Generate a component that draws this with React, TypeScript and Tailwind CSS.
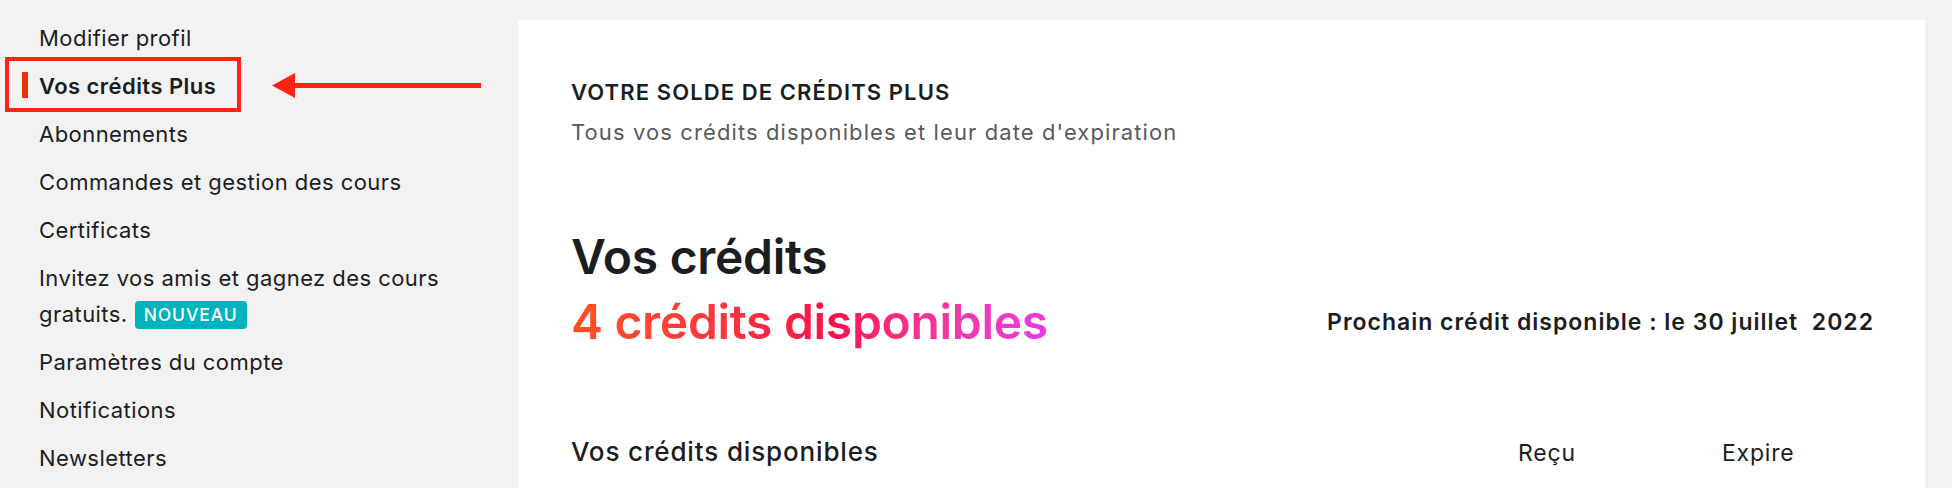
import React from 'react';

const menuItems = [
  { label: 'Modifier profil' },
  { label: 'Vos crédits Plus', active: true },
  { label: 'Abonnements' },
  { label: 'Commandes et gestion des cours' },
  { label: 'Certificats' },
  { label: 'Invitez vos amis et gagnez des cours gratuits.', badge: 'NOUVEAU' },
  { label: 'Paramètres du compte' },
  { label: 'Notifications' },
  { label: 'Newsletters' },
];

function Sidebar() {
  return (
    <nav className="relative w-[518px] shrink-0 pt-[14px]">
      <ul>
        {menuItems.map((item) => (
          <li
            key={item.label}
            className={`relative py-[6px] pl-[39px] pr-[38px] text-[22px] leading-[36px] tracking-[0.45px] text-[#1c1d1f] ${
              item.active ? 'font-semibold' : 'font-normal'
            }`}
          >
            {item.active && (
              <span className="absolute left-[22px] top-[10px] h-[26px] w-[6px] bg-[#ea2e0e]" />
            )}
            <span className="block w-[441px]">
              {item.label}
              {item.badge && (
                <span className="ml-[7px] inline-block rounded-[4px] bg-[#00b3bd] px-[9px] align-[1px] text-[17.5px] font-medium leading-[28px] tracking-[0.9px] text-white">
                  {item.badge}
                </span>
              )}
            </span>
          </li>
        ))}
      </ul>

      {/* annotation: red box + arrow */}
      <div className="pointer-events-none absolute left-[5px] top-[57px] h-[55px] w-[236px] border-[4px] border-[#ff2312]" />
      <svg
        className="pointer-events-none absolute left-[272px] top-[73px]"
        width="210"
        height="25"
        viewBox="0 0 210 25"
      >
        <line x1="22" y1="12.5" x2="209" y2="12.5" stroke="#ff2312" strokeWidth="5" />
        <polygon points="0,12.5 23,0 23,25" fill="#ff2312" />
      </svg>
    </nav>
  );
}

function CreditsPanel() {
  return (
    <main className="mt-[20px] mr-[27px] flex-1 bg-white pt-[57px] pl-[53px] pr-[51px]">
      <h3 className="text-[22px] font-semibold leading-[30px] tracking-[1.1px] text-[#1c1d1f]">
        VOTRE SOLDE DE CRÉDITS PLUS
      </h3>
      <p className="mt-[10px] text-[22px] leading-[30px] tracking-[1.1px] text-[#5a5a5a]">
        Tous vos crédits disponibles et leur date d'expiration
      </p>

      <h2 className="mt-[81px] text-[48px] font-semibold leading-[58px] tracking-[-0.3px] text-[#1c1d1f]">
        Vos crédits
      </h2>
      <div className="mt-[7px] flex items-center justify-between">
        <span className="bg-linear-to-r from-[#ff5020] via-[#ff0a4a] via-55% to-[#ec38e6] bg-clip-text text-[48px] font-semibold leading-[58px] tracking-[-0.3px] text-transparent">
          4 crédits disponibles
        </span>
        <span className="text-[23px] font-semibold leading-[30px] tracking-[1px] text-[#1c1d1f]">
          Prochain crédit disponible : le 30 juillet&nbsp; 2022
        </span>
      </div>

      <div className="mt-[84px] flex items-baseline text-[#1c1d1f]">
        <span className="flex-1 text-[26px] font-medium leading-[34px] tracking-[0.85px]">
          Vos crédits disponibles
        </span>
        <span className="w-[204px] text-[23px] leading-[34px] tracking-[0.8px]">Reçu</span>
        <span className="w-[152px] text-[23px] leading-[34px] tracking-[0.8px]">Expire</span>
      </div>
    </main>
  );
}

export default function App() {
  return (
    <div
      className="flex h-screen overflow-hidden bg-[#f2f2f2]"
      style={{ fontFamily: 'Inter, "Noto Sans", "Liberation Sans", sans-serif' }}
    >
      <Sidebar />
      <CreditsPanel />
    </div>
  );
}
